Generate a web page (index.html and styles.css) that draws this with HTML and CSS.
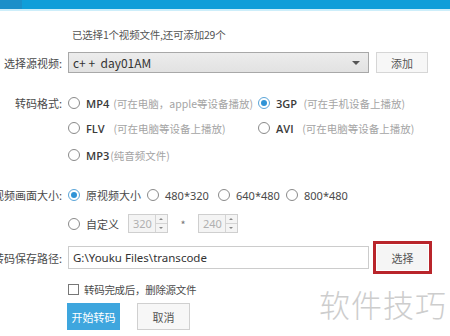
FILE: index.html
```html
<!DOCTYPE html>
<html lang="zh-CN">
<head>
    <meta charset="UTF-8">
    <meta name="viewport" content="width=device-width, initial-scale=1.0">
    <title>转码</title>
    <link rel="stylesheet" href="styles.css">
</head>
<body>
    <div class="titlebar"><span class="title-tab"></span></div>
    <div class="panel">
        <div class="row hint-row">
            <span class="field-label"></span>
            <span class="hint">已选择1个视频文件,还可添加29个</span>
        </div>
        <div class="row source-row">
            <span class="field-label">选择源视频:</span>
            <div class="select">
                <span>c+ + &nbsp;day01AM</span>
                <span class="select-arrow"></span>
            </div>
            <button class="btn btn-light add-btn">添加</button>
        </div>

        <div class="row fmt-row first">
            <span class="field-label">转码格式:</span>
            <label class="option w-fmt"><span class="radio"></span><b>MP4</b><em>(可在电脑，apple等设备播放)</em></label>
            <label class="option"><span class="radio checked"></span><b>3GP</b><em>&nbsp;(可在手机设备上播放)</em></label>
        </div>
        <div class="row fmt-row">
            <span class="field-label"></span>
            <label class="option w-fmt"><span class="radio"></span><b>FLV</b><em>&nbsp;&nbsp;(可在电脑等设备上播放)</em></label>
            <label class="option"><span class="radio"></span><b>AVI</b><em>&nbsp;&nbsp;(可在电脑等设备上播放)</em></label>
        </div>
        <div class="row fmt-row">
            <span class="field-label"></span>
            <label class="option"><span class="radio"></span><b>MP3</b><em class="tight">(纯音频文件)</em></label>
        </div>

        <div class="row size-row first">
            <span class="field-label">视频画面大小:</span>
            <label class="option w-s1"><span class="radio checked"></span>原视频大小</label>
            <label class="option w-s2"><span class="radio"></span>480*320</label>
            <label class="option w-s3"><span class="radio"></span>640*480</label>
            <label class="option"><span class="radio"></span>800*480</label>
        </div>
        <div class="row size-row custom">
            <span class="field-label"></span>
            <label class="option w-custom"><span class="radio"></span>自定义</label>
            <div class="spin"><span class="spin-val">320</span><span class="spin-btns"><i class="up"></i><i class="down"></i></span></div>
            <span class="times">*</span>
            <div class="spin"><span class="spin-val">240</span><span class="spin-btns"><i class="up"></i><i class="down"></i></span></div>
        </div>

        <div class="row path-row">
            <span class="field-label">转码保存路径:</span>
            <div class="path-input">G:\Youku Files\transcode</div>
            <div class="focus-ring"><button class="btn btn-light pick-btn">选择</button></div>
        </div>

        <div class="row check-row">
            <span class="field-label"></span>
            <label class="option check-text"><span class="checkbox"></span>转码完成后，删除源文件</label>
        </div>

        <div class="row action-row">
            <span class="field-label"></span>
            <button class="btn btn-primary">开始转码</button>
            <button class="btn btn-light cancel-btn">取消</button>
        </div>
    </div>
    <div class="watermark">软件技巧</div>
</body>
</html>
```

FILE: styles.css
```css
body {
    margin: 0;
    padding: 0;
    width: 450px;
    height: 336px;
    overflow: hidden;
    background-color: #fff;
    color: #3a3a3a;
    font-family: "Noto Sans CJK SC", "Liberation Sans", sans-serif;
    font-size: 11px;
    position: relative;
}
.titlebar {
    height: 9px;
    background-color: #109ed9;
    border-bottom: 2px solid #cdeefa;
}
.title-tab {
    display: block;
    width: 22px;
    height: 9px;
    background-color: #1b8fc9;
}
.panel {
    padding-top: 14px;
}
.row {
    display: flex;
    align-items: center;
    height: 18px;
    white-space: nowrap;
}
.field-label {
    display: flex;
    justify-content: flex-end;
    flex: none;
    width: 62px;
    margin-right: 6px;
    color: #4a4a4a;
}
.hint {
    margin-left: 4px;
    color: #555;
    font-size: 10.5px;
    letter-spacing: -0.2px;
}
.source-row {
    margin-top: 9px;
    height: 21px;
}
.select {
    display: flex;
    align-items: center;
    justify-content: space-between;
    box-sizing: border-box;
    width: 301px;
    height: 21px;
    padding: 0 8px 0 4px;
    border: 1px solid #a8a8a8;
    background: linear-gradient(#ececec, #e2e2e2);
    color: #333;
    font-size: 12px;
}
.select-arrow {
    width: 0;
    height: 0;
    border-left: 4px solid transparent;
    border-right: 4px solid transparent;
    border-top: 4px solid #555;
}
.btn {
    font-family: inherit;
    font-size: 11px;
    box-sizing: border-box;
    padding: 0;
    cursor: pointer;
}
.btn-light {
    background-color: #f7f7f7;
    border: 1px solid #d6d6d6;
    color: #555;
}
.add-btn {
    width: 52px;
    height: 21px;
    margin-left: 7px;
}
.fmt-row.first {
    margin-top: 21px;
}
.fmt-row {
    margin-top: 7px;
}
.fmt-row + .fmt-row + .fmt-row {
    margin-top: 9px;
}
.option {
    display: flex;
    align-items: center;
    flex: none;
    color: #4a4a4a;
}
.option b {
    font-family: "Open Sans", "Noto Sans", sans-serif;
    font-weight: 600;
    font-size: 11px;
    color: #3a3a3a;
    margin-right: 4px;
}
.option em {
    font-style: normal;
    color: #a4a4a4;
    font-size: 10.5px;
}
.option em.tight {
    margin-left: -3px;
}
.w-fmt {
    width: 190px;
}
.radio {
    box-sizing: border-box;
    width: 12px;
    height: 12px;
    margin-right: 6px;
    border: 1px solid #8a8a8a;
    border-radius: 50%;
    background-color: #fff;
    position: relative;
}
.radio.checked {
    border-color: #5aa5d8;
}
.radio.checked::after {
    content: "";
    position: absolute;
    left: 2px;
    top: 2px;
    width: 6px;
    height: 6px;
    border-radius: 50%;
    background-color: #2f93d6;
}
.size-row.first {
    margin-top: 22px;
}
.size-row .option {
    font-family: "Noto Sans", "Noto Sans CJK SC", sans-serif;
    color: #4a4a4a;
}
.w-s1 {
    width: 79px;
}
.w-s2 {
    width: 71px;
}
.w-s3 {
    width: 68px;
}
.size-row.custom {
    margin-top: 10px;
    height: 19px;
}
.w-custom {
    width: 60px;
}
.spin {
    display: flex;
    box-sizing: border-box;
    width: 40px;
    height: 19px;
    border: 1px solid #cfcfcf;
    background-color: #f4f4f4;
}
.spin-val {
    flex: 1;
    padding-left: 4px;
    line-height: 17px;
    color: #b0b0b0;
    font-family: "Noto Sans", sans-serif;
}
.spin-btns {
    display: flex;
    flex-direction: column;
    width: 11px;
    border-left: 1px solid #d4d4d4;
}
.spin-btns i {
    flex: 1;
    position: relative;
}
.spin-btns i.up {
    border-bottom: 1px solid #d4d4d4;
}
.spin-btns i::after {
    content: "";
    position: absolute;
    left: 3px;
    top: 3px;
    border-left: 2px solid transparent;
    border-right: 2px solid transparent;
}
.spin-btns i.up::after {
    border-bottom: 2px solid #888;
}
.spin-btns i.down::after {
    border-top: 2px solid #888;
}
.times {
    width: 30px;
    text-align: center;
    color: #777;
}
.path-row {
    margin-top: 8px;
    height: 33px;
}
.path-input {
    box-sizing: border-box;
    width: 301px;
    height: 23px;
    padding-left: 4px;
    line-height: 21px;
    border: 1px solid #cccccc;
    background-color: #fff;
    color: #333;
    font-family: "Noto Sans", sans-serif;
    font-size: 11.5px;
}
.focus-ring {
    box-sizing: border-box;
    width: 59px;
    height: 33px;
    margin-left: 4px;
    border: 3px solid #b9252b;
    padding: 1px;
}
.pick-btn {
    width: 100%;
    height: 100%;
    border: none;
    background-color: #f5f5f5;
}
.check-row {
    margin-top: 6px;
}
.check-text {
    font-size: 10.5px;
    letter-spacing: -0.3px;
}
.checkbox {
    box-sizing: border-box;
    width: 11px;
    height: 11px;
    margin-right: 5px;
    border: 1px solid #777;
    background-color: #fff;
}
.action-row {
    margin-top: 5px;
    height: 27px;
}
.action-row .field-label {
    width: 61px;
}
.btn-primary {
    width: 53px;
    height: 27px;
    border: none;
    background-color: #3ea6de;
    color: #fff;
}
.cancel-btn {
    width: 53px;
    height: 27px;
    margin-left: 17px;
    border-color: #d0d0d0;
}
.watermark {
    position: absolute;
    left: 319px;
    top: 281px;
    font-size: 31px;
    font-weight: 300;
    letter-spacing: 1px;
    color: #cdcdcd;
}
```
